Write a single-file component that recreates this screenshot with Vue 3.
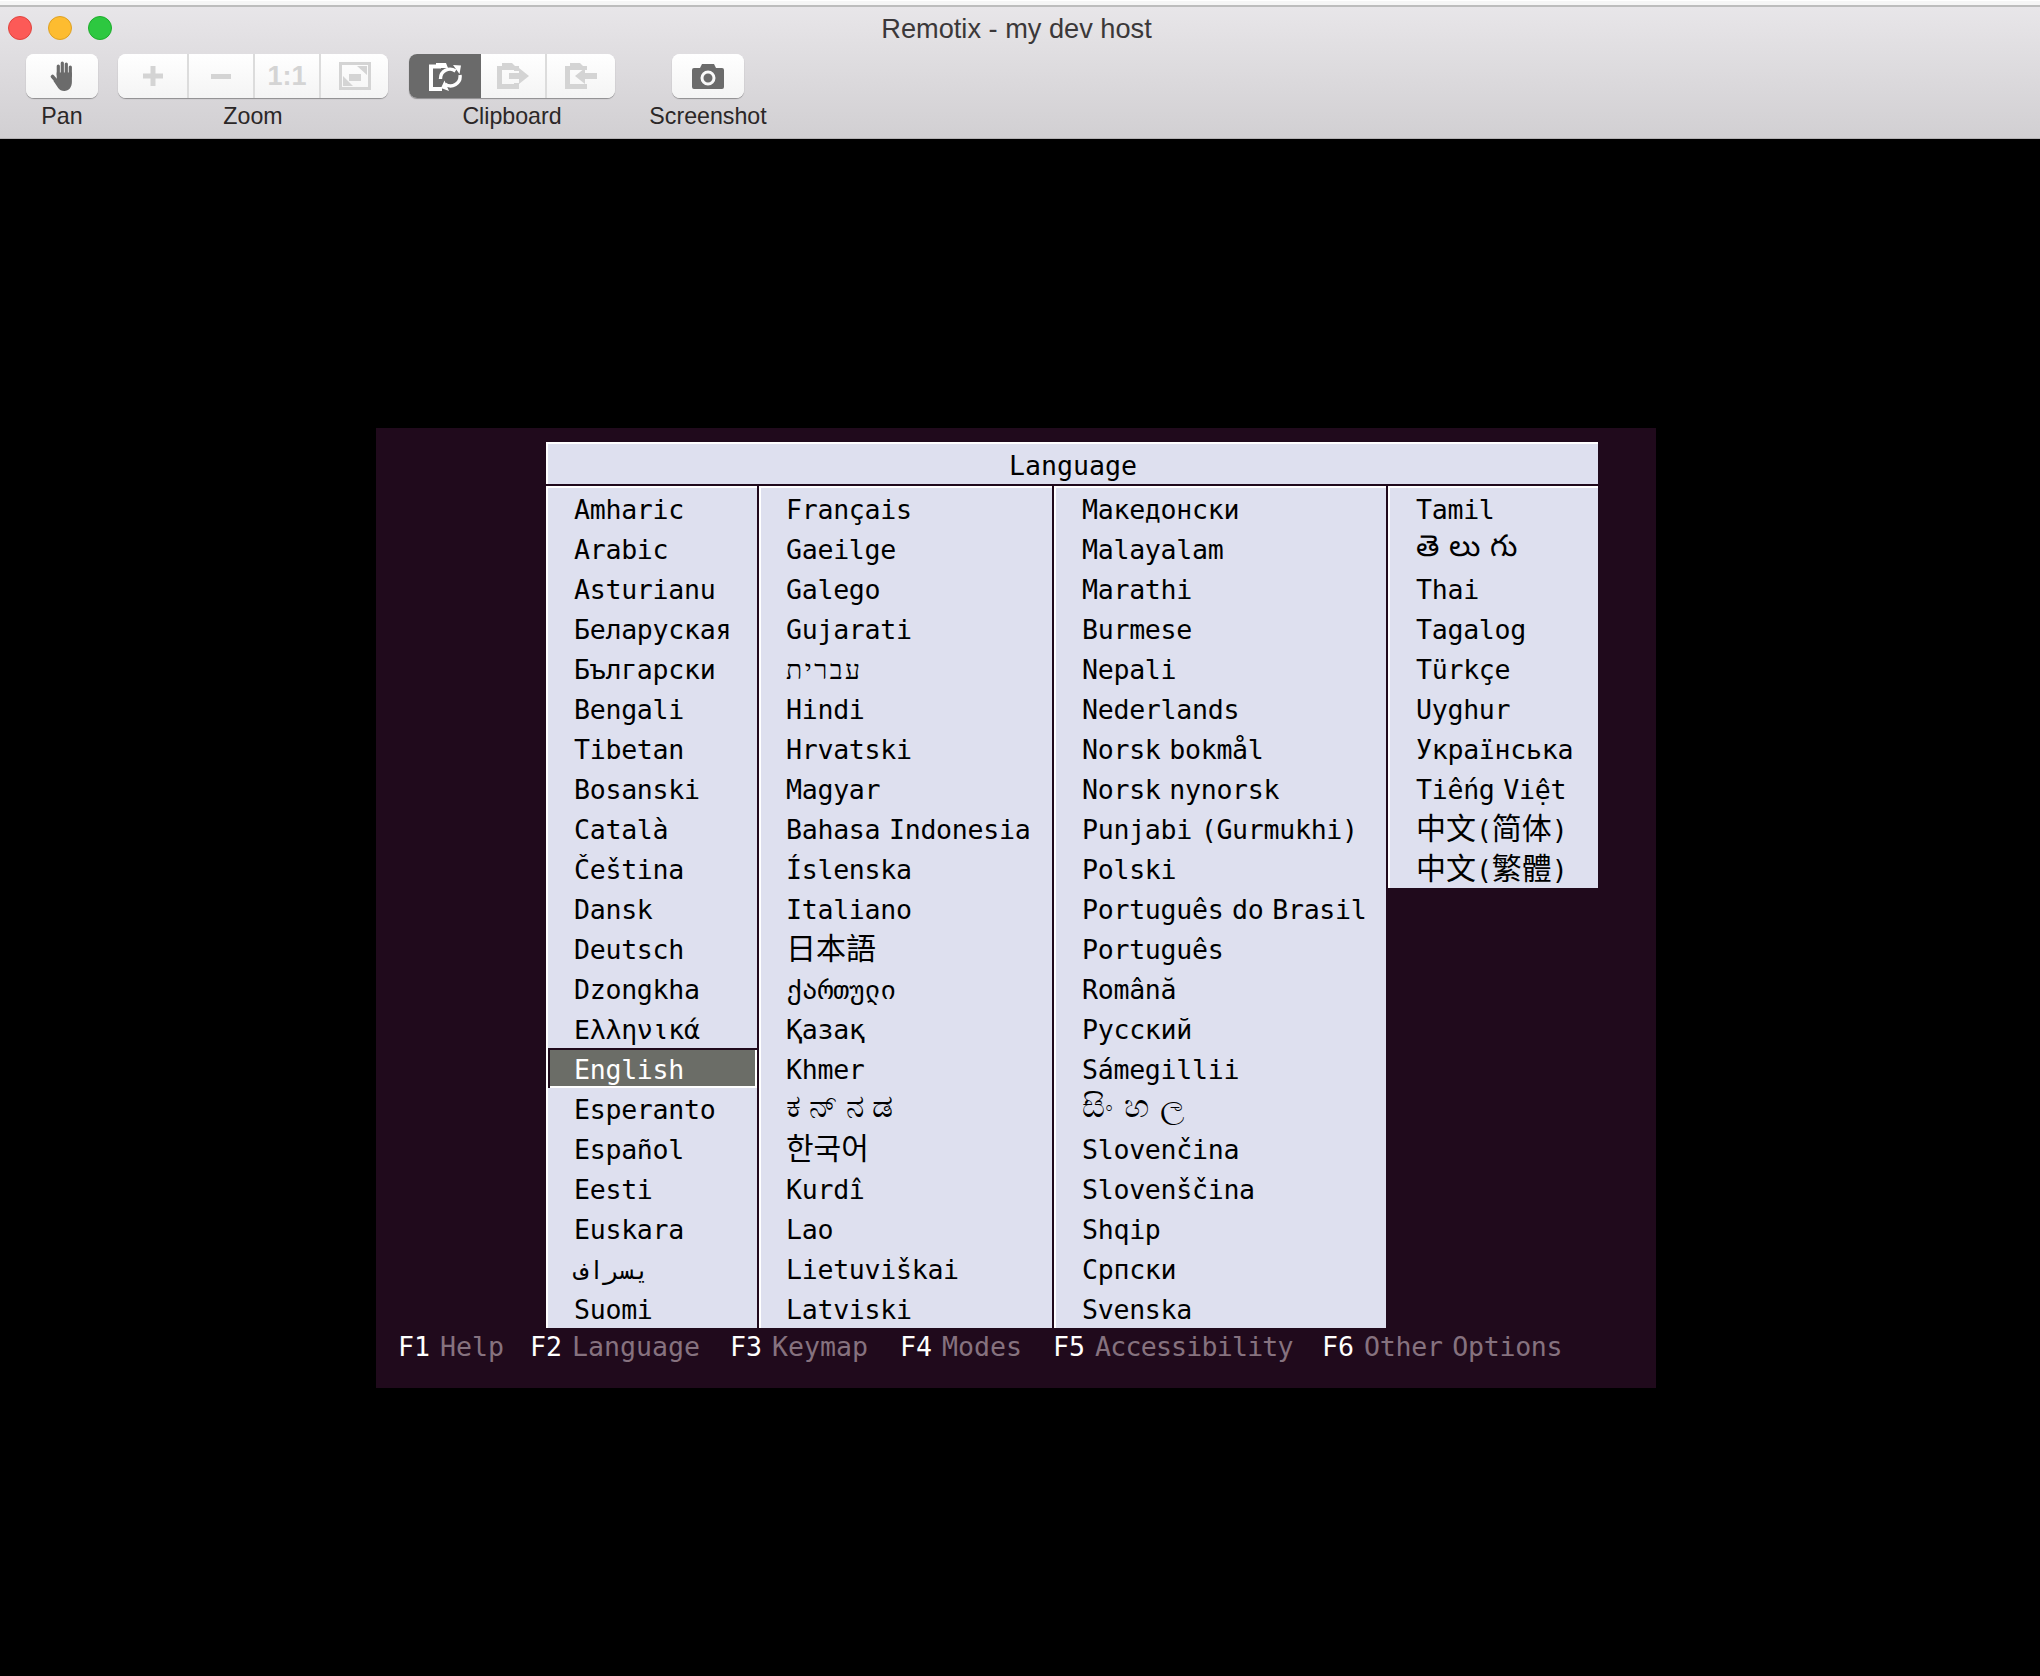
<template>
  <div class="window">
    <header class="toolbar">
      <div class="titlebar">
        <div class="lights">
          <span class="light red"></span>
          <span class="light yellow"></span>
          <span class="light green"></span>
        </div>
        <div class="title">Remotix - my dev host</div>
      </div>
      <div class="tools">
        <div class="tool tool-pan">
          <div class="btns">
            <button class="btn w72">
              <svg width="24" height="30" viewBox="0 0 24 30">
                <g fill="none" stroke="#6b6b6b" stroke-linecap="round">
                  <path stroke-width="3.200" d="M8.300 14V5M12.300 14V2M16.300 14V3M20.300 15V6"/>
                  <path stroke-width="3.600" d="M2.500 15.500l6 7"/>
                </g>
                <path fill="#6b6b6b" d="M6.700 11.500h15.200V21c0 5-3 9-7.600 9-2.800 0-4.700-1-6.100-3L3.500 20l3.200-1.500z"/>
              </svg>
            </button>
          </div>
          <span class="label">Pan</span>
        </div>
        <div class="tool tool-zoom">
          <div class="btns">
            <button class="btn w69">
              <svg width="20" height="20" viewBox="0 0 20 20"><path fill="#d4d4d4" d="M7.500 0h5v7.500H20v5h-7.500V20h-5v-7.500H0v-5h7.500z"/></svg>
            </button>
            <button class="btn w64">
              <svg width="20" height="5" viewBox="0 0 20 5"><rect width="20" height="5" fill="#d4d4d4"/></svg>
            </button>
            <button class="btn w64 ratio">1:1</button>
            <button class="btn">
              <svg width="32" height="28" viewBox="0 0 32 28"><path fill="none" stroke="#d4d4d4" stroke-width="3" d="M1.500 1.500h29v25h-29z"/><path fill="#d4d4d4" d="M10 12h12v7H10zM18 4h10v9zM4 14l10 10H4z"/></svg>
            </button>
          </div>
          <span class="label">Zoom</span>
        </div>
        <div class="tool tool-clip">
          <div class="btns">
            <button class="btn w72 on">
              <svg width="33" height="29" viewBox="0 0 33 29"><path fill="none" stroke="#fff" stroke-width="4" d="M13 27H2V4.500h10"/><path fill="#fff" d="M7 1h10l2 5H7z"/><path fill="none" stroke="#fff" stroke-width="3.400" d="M11.500 17a9.500 9.500 0 0 1 15-8M31 13a9.500 9.500 0 0 1-15 9"/><path fill="#fff" d="M24 3l8 .5-1.500 8.500zM20 29l-8-3 3.500-7.500z"/></svg>
            </button>
            <button class="btn w64">
              <svg width="32" height="26" viewBox="0 0 32 26"><path fill="#d4d4d4" d="M0 3h5V0h10l3 3h4v5h-5V7H5v14h12v-1h5v6H0z"/><path fill="#d4d4d4" d="M12 10h10V5l10 8-10 8v-5H12z"/></svg>
            </button>
            <button class="btn">
              <svg width="32" height="26" viewBox="0 0 32 26"><path fill="#d4d4d4" d="M0 3h5V0h10l3 3h4v4H5v14h17v5H0z"/><path fill="#d4d4d4" d="M32 10H20V5L10 13l10 8v-5h12z"/></svg>
            </button>
          </div>
          <span class="label">Clipboard</span>
        </div>
        <div class="tool tool-shot">
          <div class="btns">
            <button class="btn w72">
              <svg width="32" height="25" viewBox="0 0 32 25"><path fill="#6b6b6b" fill-rule="evenodd" d="M2 4h6l2-4h12l2 4h6a2 2 0 0 1 2 2v17a2 2 0 0 1-2 2H2a2 2 0 0 1-2-2V6a2 2 0 0 1 2-2zm14 2.500a7.500 7.500 0 1 0 0 15 7.500 7.500 0 0 0 0-15zm0 3a4.500 4.500 0 1 1 0 9 4.500 4.500 0 0 1 0-9z"/></svg>
            </button>
          </div>
          <span class="label">Screenshot</span>
        </div>
      </div>
    </header>

    <main class="remote">
      <div class="screen">
        <div class="menu">
          <div class="menu-title">Language</div>
          <div class="menu-cols">
            <ul v-for="(col, i) in columns" :key="i" class="col" :class="'col-' + i">
              <li v-for="lang in col" :key="lang" :class="{ selected: lang === 'English' }">
                <span :class="scripts[lang]">
                  <template v-for="(part, n) in splitCjk(lang)" :key="n">
                    <span v-if="n % 2" class="cjk">{{ part }}</span>
                    <template v-else>{{ part }}</template>
                  </template>
                </span>
              </li>
            </ul>
          </div>
        </div>
        <div class="footer">
          <span v-for="item in keys" :key="item.key" class="fkey"><b>{{ item.key }}</b> <i>{{ item.label }}</i></span>
        </div>
      </div>
    </main>
  </div>
</template>

<script setup>
const kannada = 'ಕನ್\u200cನಡ'

const columns = [
  ['Amharic', 'Arabic', 'Asturianu', 'Беларуская', 'Български', 'Bengali', 'Tibetan', 'Bosanski', 'Català', 'Čeština', 'Dansk', 'Deutsch', 'Dzongkha', 'Ελληνικά', 'English', 'Esperanto', 'Español', 'Eesti', 'Euskara', 'فارسی', 'Suomi'],
  ['Français', 'Gaeilge', 'Galego', 'Gujarati', 'עברית', 'Hindi', 'Hrvatski', 'Magyar', 'Bahasa Indonesia', 'Íslenska', 'Italiano', '日本語', 'ქართული', 'Қазақ', 'Khmer', kannada, '한국어', 'Kurdî', 'Lao', 'Lietuviškai', 'Latviski'],
  ['Македонски', 'Malayalam', 'Marathi', 'Burmese', 'Nepali', 'Nederlands', 'Norsk bokmål', 'Norsk nynorsk', 'Punjabi (Gurmukhi)', 'Polski', 'Português do Brasil', 'Português', 'Română', 'Русский', 'Sámegillii', 'සිංහල', 'Slovenčina', 'Slovenščina', 'Shqip', 'Српски', 'Svenska'],
  ['Tamil', 'తెలుగు', 'Thai', 'Tagalog', 'Türkçe', 'Uyghur', 'Українська', 'Tiếng Việt', '中文(简体)', '中文(繁體)'],
]

// scripts the boot font draws wider than our fallback fonts do
const scripts = {
  'فارسی': 'fa',
  'עברית': 'he',
  [kannada]: 'kn',
  'සිංහල': 'si',
  'తెలుగు': 'te',
}

const splitCjk = (text) => text.split(/([\u3000-\u9fff\uac00-\ud7af]+)/)

const keys = [
  { key: 'F1', label: 'Help' },
  { key: 'F2', label: 'Language' },
  { key: 'F3', label: 'Keymap' },
  { key: 'F4', label: 'Modes' },
  { key: 'F5', label: 'Accessibility' },
  { key: 'F6', label: 'Other Options' },
]
</script>

<style>
html, body {
  margin: 0;
  background: #000;
}
</style>

<style scoped>
.window {
  width: 2040px;
  height: 1676px;
  background: #000;
  overflow: hidden;
}

.toolbar {
  height: 139px;
  box-sizing: border-box;
  background: linear-gradient(#e9e7ea, #d1cfd2);
  border-top: 1px solid #fff;
  font-family: "Liberation Sans", Arimo, sans-serif;
  color: #2b2727;
  box-shadow: inset 0 4px 0 #f6f6f6, inset 0 6px 0 #bdbdbd, inset 0 -1px 0 #b4b2b4;
}

.titlebar {
  height: 53px;
  position: relative;
  display: flex;
  align-items: center;
  justify-content: center;
  box-sizing: border-box;
  padding: 2px 7px 0 0;
}

.title {
  font-size: 27.2px;
  color: #3b3839;
}

.lights {
  position: absolute;
  left: 8px;
  top: 15px;
  display: flex;
  gap: 16px;
}

.light {
  width: 24px;
  height: 24px;
  border-radius: 50%;
  box-sizing: border-box;
}
.red { background: #fc5a57; border: 1px solid #e0443e; }
.yellow { background: #fdbc30; border: 1px solid #dea123; }
.green { background: #2dc840; border: 1px solid #1dad2b; }

.tools {
  display: flex;
  align-items: flex-start;
  padding-left: 26px;
}

.tool {
  display: flex;
  flex-direction: column;
  align-items: center;
  flex: none;
}
.tool-pan { width: 72px; margin-right: 20px; }
.tool-zoom { width: 270px; margin-right: 21px; }
.tool-clip { width: 206px; margin-right: 57px; }
.tool-shot { width: 72px; }

.label {
  font-size: 23.2px;
  margin-top: 4px;
  line-height: 28px;
  white-space: nowrap;
}

.btns {
  display: flex;
  height: 44px;
  border-radius: 8px;
  overflow: hidden;
  box-shadow: 0 1px 1px rgba(0, 0, 0, .35);
  background: #fff;
  width: 100%;
}

.btn {
  border: none;
  padding: 0;
  margin: 0;
  height: 44px;
  background: linear-gradient(#fff, #f4f4f4);
  display: flex;
  align-items: center;
  justify-content: center;
  flex: none;
  border-right: 2px solid #dcdcdc;
  box-sizing: content-box;
  font-family: "Liberation Sans", sans-serif;
}
.btn:last-child { border-right: none; flex: 1; }
.w69 { width: 69px; }
.w64 { width: 64px; }
.w72 { width: 72px; }
.btn.on {
  background: #6a6a6a;
  border-right: none;
}
.ratio {
  font-size: 27px;
  font-weight: 700;
  color: #d4d4d4;
}

.remote {
  padding: 289px 0 0 376px;
}

.screen {
  width: 1280px;
  height: 960px;
  background: #200a1c;
  box-sizing: border-box;
  padding-top: 14px;
  font-family: "DejaVu Sans Mono", "Noto Sans CJK SC", monospace;
  font-size: 26.6px;
  color: #000;
}

.menu {
  width: 1052px;
  margin-left: 170px;
}

.menu-title {
  height: 42px;
  line-height: 44px;
  background: #dee0ef;
  border-top: 2px solid #fff;
  border-left: 2px solid #fff;
  box-sizing: border-box;
  text-align: center;
}

.menu-cols {
  display: flex;
  margin-top: 2px;
  gap: 2px;
  align-items: flex-start;
}

.col {
  list-style: none;
  margin: 0;
  padding: 0;
  background: #dee0ef;
  border-top: 2px solid #fff;
  border-left: 2px solid #fff;
  box-sizing: border-box;
  flex: none;
}
.col-0 { width: 211px; }
.col-1 { width: 293px; }
.col-2 { width: 332px; }
.col-3 { width: 210px; }

.col li {
  height: 40px;
  line-height: 44px;
  white-space: nowrap;
  padding-left: 26px;
  letter-spacing: -.3px;
  word-spacing: -7px;
}
.col-1 li { padding-left: 25px; }

.col li.selected {
  background: #6b6d67;
  color: #fff;
  box-shadow: inset 2px 2px 0 #200a1c, inset -2px -2px 0 #fff;
}

.cjk {
  font-size: 30px;
  line-height: 30px;
  letter-spacing: 0;
}

.fa {
  unicode-bidi: bidi-override;
  direction: ltr;
  font-size: 25px;
}
.he { letter-spacing: 2.500px; }
.kn {
  font-size: 33px;
  line-height: 30px;
  letter-spacing: 8px;
  vertical-align: 2px;
}
.si {
  font-size: 32px;
  line-height: 30px;
  letter-spacing: 11px;
  vertical-align: 2px;
}
.te {
  font-size: 30px;
  line-height: 30px;
  letter-spacing: 10px;
  vertical-align: 3px;
}

.footer {
  display: grid;
  grid-template-columns: 132px 200px 170px 153px 269px auto;
  padding-left: 22px;
  height: 40px;
  line-height: 38px;
  color: #86727f;
  white-space: pre;
  word-spacing: -6px;
}

.fkey b {
  font-weight: 400;
  color: #fff;
}

.fkey i {
  font-style: normal;
}

.fkey:nth-child(5) i {
  letter-spacing: -.8px;
}

.fkey:nth-child(6) i {
  letter-spacing: -.3px;
}
</style>
